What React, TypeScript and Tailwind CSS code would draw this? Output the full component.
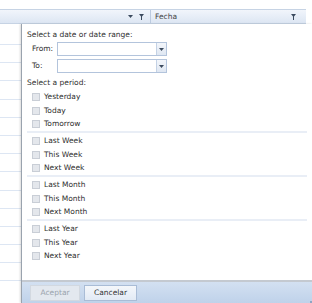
const groups = [
  ["Yesterday", "Today", "Tomorrow"],
  ["Last Week", "This Week", "Next Week"],
  ["Last Month", "This Month", "Next Month"],
  ["Last Year", "This Year", "Next Year"],
];

function Funnel() {
  return (
    <svg width="5" height="6" viewBox="0 0 5 6">
      <path d="M0 0h5L3 2.5V6H2V2.5z" fill="#3b4a5e" />
    </svg>
  );
}

function Caret() {
  return (
    <svg width="5" height="3" viewBox="0 0 5 3">
      <path d="M0 0h5L2.5 3z" fill="#3b4a5e" />
    </svg>
  );
}

function DateInput() {
  return (
    <div className="flex h-[14px] w-[110px] border border-[#b3c4dc] bg-white">
      <div className="flex-1" />
      <div className="flex w-[10px] items-center justify-center border-l border-[#c4d2e5] bg-gradient-to-b from-[#f3f6fb] to-[#dfe7f2]">
        <Caret />
      </div>
    </div>
  );
}

function Check({ label }: { label: string }) {
  return (
    <div className="flex h-[13.5px] items-center gap-[4px]">
      <span className="h-[8px] w-[8px] border border-[#c9ced6] bg-[#e4e7ec]" />
      <span>{label}</span>
    </div>
  );
}

export default function App() {
  return (
    <div
      className="relative h-[303px] w-[312px] overflow-hidden bg-white text-[7.5px] leading-[12px] text-[#2e2e2e]"
      style={{ fontFamily: "Tahoma, 'DejaVu Sans', sans-serif" }}
    >
      <div className="h-[9px]" />
      {/* grid header */}
      <div className="flex h-[15px] w-[306px] border-y border-[#c6d3e4] bg-gradient-to-b from-[#f1f5fb] to-[#dde6f3]">
        <div className="flex w-[151px] items-center justify-end gap-[6px] border-r border-[#bccbe0] pr-[6px]">
          <Caret />
          <Funnel />
        </div>
        <div className="flex flex-1 items-center justify-between px-[4px] text-[#444]">
          <span>Fecha</span>
          <span className="mr-[6px]">
            <Funnel />
          </span>
        </div>
      </div>
      {/* grid rows behind popup */}
      <div className="flex flex-col">
        <div className="h-[21px] border-b border-[#dde6f3]" />
        {Array.from({ length: 13 }).map((_, i) => (
          <div key={i} className="h-[18.2px] border-b border-[#dde6f3]" />
        ))}
      </div>

      {/* date filter popup */}
      <div className="absolute left-[21px] top-[24px] flex h-[279px] w-[291px] flex-col border-l border-[#9aa3ae] bg-white shadow-[-1px_0_2px_rgba(0,0,0,0.15)]">
        <div className="flex-1 px-[5px] pt-[5px]">
          <div className="h-[12px]">Select a date or date range:</div>
          <div className="mt-[1px] flex items-center pl-[5px]">
            <span className="w-[25px]">From:</span>
            <DateInput />
          </div>
          <div className="mt-[3px] flex items-center pl-[5px]">
            <span className="w-[25px]">To:</span>
            <DateInput />
          </div>
          <div className="mt-[4px] h-[12px]">Select a period:</div>
          <div className="mt-[1.25px] flex flex-col">
            {groups.map((g, gi) => (
              <div
                key={gi}
                className={`flex flex-col pl-[5px] ${
                  gi < groups.length - 1 ? "mb-[1px] border-b-2 border-[#e9eef6] pb-[0.5px]" : ""
                }`}
              >
                {g.map((l) => (
                  <Check key={l} label={l} />
                ))}
              </div>
            ))}
          </div>
        </div>
        <div className="relative flex h-[23px] items-center gap-[4px] border-t-2 border-[#c4c9d0] bg-gradient-to-b from-[#d3e0f1] to-[#bfd2ea] pl-[8px]">
          <button className="h-[16px] w-[50px] border border-[#d2d8e0] bg-[#e3e8ef] text-[#9aa3ad]">
            Aceptar
          </button>
          <button className="h-[16px] w-[53px] border border-[#a9bcd6] bg-gradient-to-b from-[#f4f7fb] to-[#e2eaf5] text-[#333]">
            Cancelar
          </button>
          <span className="absolute bottom-0 right-0 h-[2px] w-[2px] bg-[#8fa6c4]" />
        </div>
      </div>
    </div>
  );
}
